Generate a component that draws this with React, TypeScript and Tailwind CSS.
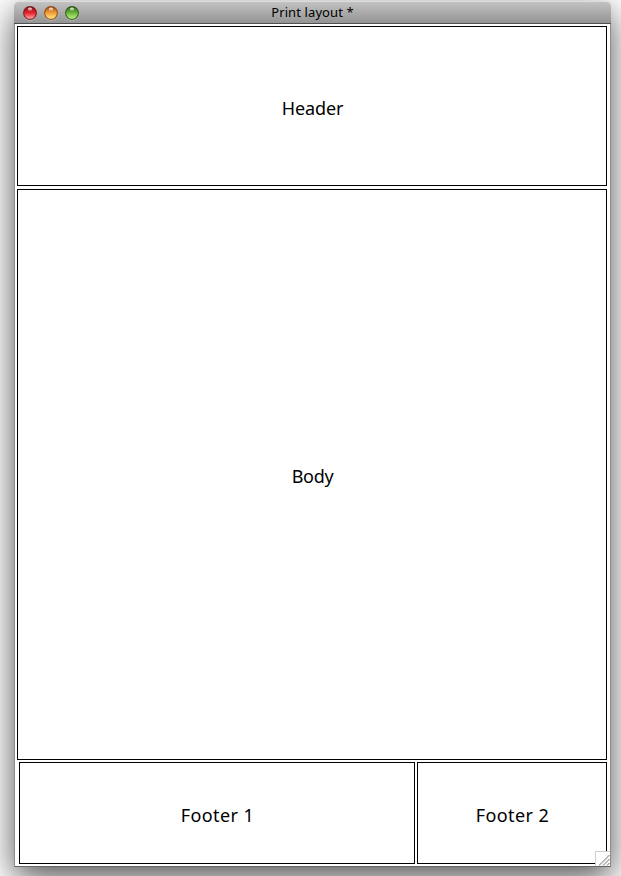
import React from 'react';

const lights = [
  { id: 'close', rim: '#6d1014', top: '#8c0d16', mid: '#e8242d', glow: '#ffb3b5' },
  { id: 'minimise', rim: '#84400f', top: '#a9480f', mid: '#f2a03a', glow: '#fff08a' },
  { id: 'zoom', rim: '#25520f', top: '#2c5f12', mid: '#6cb83c', glow: '#c8f58c' },
];

function TrafficLight({ id, rim, top, mid, glow }: (typeof lights)[number]) {
  return (
    <svg width="15" height="16" viewBox="0 0 15 16" aria-hidden="true">
      <defs>
        <linearGradient id={`${id}-fill`} x1="0" y1="0" x2="0" y2="1">
          <stop offset="0" stopColor={top} />
          <stop offset="0.5" stopColor={mid} />
          <stop offset="1" stopColor={glow} />
        </linearGradient>
        <linearGradient id={`${id}-shine`} x1="0" y1="0" x2="0" y2="1">
          <stop offset="0" stopColor="#fff" stopOpacity="0.95" />
          <stop offset="1" stopColor="#fff" stopOpacity="0.1" />
        </linearGradient>
      </defs>
      <circle cx="8" cy="9" r="6.8" fill="#fff" fillOpacity="0.4" />
      <circle cx="8" cy="8" r="6.4" fill={`url(#${id}-fill)`} stroke={rim} strokeWidth="1.1" strokeOpacity="0.85" />
      <ellipse cx="8" cy="4.4" rx="2.2" ry="1.8" fill={`url(#${id}-shine)`} />
    </svg>
  );
}

function Panel({ label, className }: { label: string; className: string }) {
  return (
    <section className={`flex items-center justify-center border border-black text-[18px] leading-6 ${className}`}>
      <span>{label}</span>
    </section>
  );
}

export default function App() {
  return (
    <div className="h-[876px] w-[621px] overflow-hidden bg-white pt-px pl-[14px] font-['Noto_Sans',sans-serif] text-black">
      <main className="relative flex h-[866px] w-[597px] flex-col rounded-t-[5px] bg-white shadow-[0_11px_34px_rgba(0,0,0,0.68)]">
        <header className="relative flex h-[23px] shrink-0 items-center justify-center rounded-t-[5px] border-t border-b border-t-[#dcdcdc] border-b-[#505050] bg-linear-to-b from-[#c2c2c2] to-[#949494] pb-[2px]">
          <div className="absolute top-[3px] left-[8px] flex gap-[6px]">
            {lights.map((light) => (
              <TrafficLight key={light.id} {...light} />
            ))}
          </div>
          <h1 className="text-[13px] leading-5 tracking-[0.1px]">Print layout *</h1>
        </header>
        <div className="flex grow flex-col border-x border-b border-x-[#8c8c8c] border-b-[#666] pt-[2px] pr-[3px] pb-[2px] pl-[2px]">
          <Panel label="Header" className="h-[160px] pt-[3px] pl-px tracking-[-0.1px]" />
          <Panel label="Body" className="mt-[3px] h-[571px] pt-[2px] pl-px tracking-[-0.3px]" />
          <div className="mt-[2px] ml-[2px] flex h-[102px] gap-[2px]">
            <Panel label="Footer 1" className="w-[396px] pt-1 pl-px tracking-[0.4px]" />
            <Panel label="Footer 2" className="w-[190px] pt-1 pl-px tracking-[0.4px]" />
          </div>
        </div>
        <div className="absolute right-px bottom-px h-[15px] w-[15px] border-t border-l border-[#cfcfcf] bg-white">
          <svg width="14" height="14" viewBox="0 0 14 14" aria-hidden="true">
            <path d="M3 13.5 13.5 3M7 13.5 13.5 7M11 13.5 13.5 11" stroke="#666" strokeWidth="1" fill="none" />
            <path d="M4.2 13.5 13.5 4.2M8.2 13.5 13.5 8.2" stroke="#ddd" strokeWidth="0.8" fill="none" />
          </svg>
        </div>
      </main>
    </div>
  );
}
